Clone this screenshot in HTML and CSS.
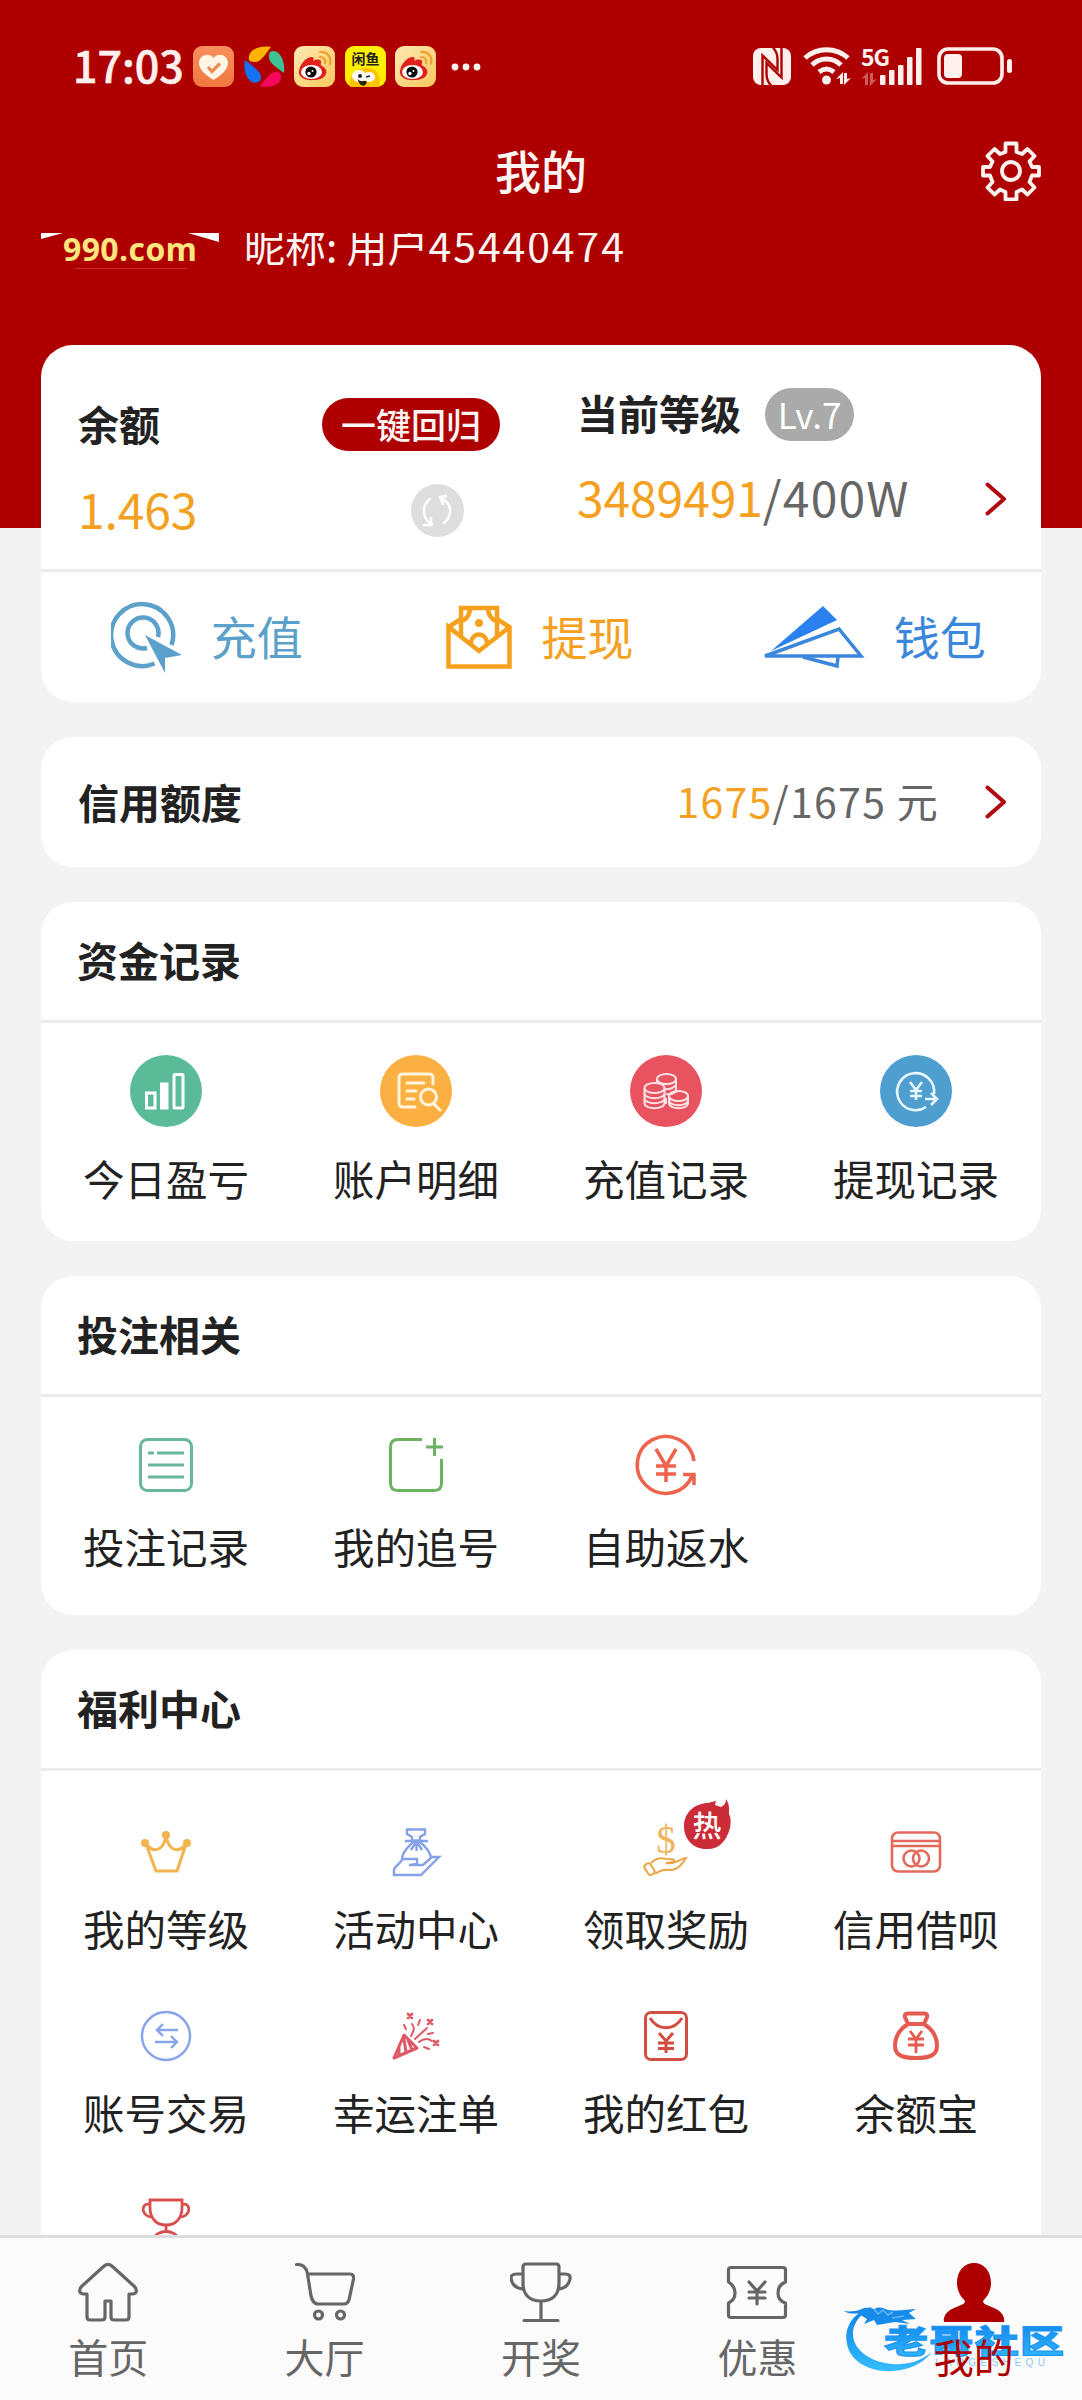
FILE: index.html
```html
<!DOCTYPE html>
<html lang="zh-CN">
<head>
<meta charset="utf-8">
<title>我的</title>
<link rel="stylesheet" href="styles.css">
</head>
<body>
<svg class="defs" width="0" height="0">
  <defs>
    <linearGradient id="peach" x1="0" y1="0" x2="1" y2="1"><stop offset="0" stop-color="#fdeab5"/><stop offset="1" stop-color="#fbc75c"/></linearGradient>
    <linearGradient id="orange" x1="0" y1="0" x2="0" y2="1"><stop offset="0" stop-color="#f98f5c"/><stop offset="1" stop-color="#f0783f"/></linearGradient>
    <linearGradient id="sky" x1="0" y1="0" x2="0" y2="1"><stop offset="0" stop-color="#0a7fe8"/><stop offset="1" stop-color="#35bcff"/></linearGradient>
    <symbol id="weibo" viewBox="0 0 41 41">
      <rect width="41" height="41" rx="9" fill="url(#peach)"/>
      <path d="M5 25C6 18 12 11 18 11c2 0 2 2 1 4 4-2 8-2 8 1 0 2-1 3 1 4 8 4 5 14-8 14C11 35 4 31 5 25z" fill="#e0201b"/>
      <ellipse cx="17.500" cy="26" rx="10.500" ry="7" fill="#fff"/>
      <circle cx="17" cy="26" r="5.600" fill="#0b0b0b"/>
      <circle cx="15" cy="27.500" r="1.700" fill="#fff"/><circle cx="18.500" cy="25" r="1" fill="#fff"/>
      <path d="M26 6c7-1 12 5 10 12M26 11c4 0 6 3 5 6" fill="none" stroke="#f0a030" stroke-width="2.200" stroke-linecap="round"/>
    </symbol>
    <symbol id="chevron" viewBox="0 0 22 34"><path d="M2.500 2.500L19 17 2.500 31.500" fill="none" stroke="#b00a10" stroke-width="4" stroke-linecap="round" stroke-linejoin="round"/></symbol>
  </defs>
</svg>

<header class="hero">
  <div class="statusbar">
    <span class="clock">17:03</span>
    <div class="apps">
      <svg width="41" height="41" viewBox="0 0 41 41"><rect width="41" height="41" rx="9" fill="url(#orange)"/><path d="M20.500 34C12 29 6 23 6 17c0-8 10-11 14.500-5C25 6 35 9 35 17c0 6-6 12-14.500 17z" fill="#fff6e6"/><path d="M15 21l4 4.500 8-8" fill="none" stroke="#e98c54" stroke-width="3.200"/></svg>
      <svg width="41" height="41" viewBox="0 0 41 41"><path d="M5 14C3 3 17-1 27 1 21 8 17 17 10 16c-3 0-4-1-5-2z" fill="#ffb300"/><path d="M26 6c8-5 16 8 14 21-6-5-15-9-15-16 0-2 0-4 1-5z" fill="#3cc295"/><path d="M36 27c5 11-10 16-20 13 5-6 11-14 16-14 2 0 3 0 4 1z" fill="#f5095f"/><path d="M14 36C6 40-2 27 1 14c6 5 16 11 16 17 0 3-1 4-3 5z" fill="#1572f5"/></svg>
      <svg width="41" height="41"><use href="#weibo"/></svg>
      <svg width="41" height="41" viewBox="0 0 41 41"><rect width="41" height="41" rx="9" fill="#fff000"/><path d="M5 41C2 29 12 22 21 22c10 0 16 6 13 19z" fill="#ffc400"/><ellipse cx="14" cy="30" rx="7" ry="6" fill="#fff"/><ellipse cx="24" cy="31" rx="6" ry="5" fill="#fff"/><circle cx="15" cy="30" r="2" fill="#222"/><path d="M21 31l4-1M14 35c3 2 5 0 7 1-1 4-5 4-7-1z" stroke="#222" stroke-width="1.500" fill="#222"/><text x="20.500" y="17.500" class="fish">闲鱼</text></svg>
      <svg width="41" height="41"><use href="#weibo"/></svg>
    </div>
    <svg class="more" width="30" height="8" viewBox="0 0 30 8"><g fill="#fff0ee"><circle cx="4" cy="4" r="3.400"/><circle cx="15" cy="4" r="3.400"/><circle cx="26" cy="4" r="3.400"/></g></svg>
    <svg class="signals" width="262" height="42" viewBox="0 0 262 42" fill="#fff0ee">
      <rect x="1" y="2" width="38" height="37" rx="8"/>
      <path d="M10.500 40V9.500L25.500 24V13q0-7-5-12M29.500 1v30.500L14.500 17v11q0 7 5 12" fill="none" stroke="#ae0000" stroke-width="2.400"/>
      <path d="M53 12c12-11 31-11 43 0M60 19c8-8 21-8 29 0M67 26c5-4 10-4 15 0" fill="none" stroke="#fff0ee" stroke-width="5"/>
      <circle cx="74.500" cy="34" r="4.500"/>
      <path d="M84 33l7-7v12h-3v-6zM99 32l-7 7V27h3v6z"/>
      <text x="109" y="19.500" class="fiveg">5G</text>
      <g opacity=".38"><path d="M109 33l7-7v13h-3v-7zM125 33l-7 7V27h3v7z"/></g>
      <rect x="128" y="29" width="5.500" height="10" rx="1"/><rect x="137" y="24" width="5.500" height="15" rx="1"/><rect x="146" y="19" width="5.500" height="20" rx="1"/><rect x="155" y="11" width="5.500" height="28" rx="1"/><rect x="164" y="2" width="5.500" height="37" rx="1"/>
      <rect x="187" y="3" width="63" height="34" rx="9" fill="none" stroke="#fff0ee" stroke-width="3.600"/>
      <rect x="192" y="8" width="18" height="24" rx="4"/><rect x="255" y="13" width="5" height="14" rx="2.500"/>
    </svg>
  </div>
  <div class="titlebar">
    <h1>我的</h1>
    <svg class="gear" width="60" height="60" viewBox="-30 -30 60 60" fill="none" stroke="#fff3f0" stroke-width="3.800" stroke-linejoin="round"><path d="M-5.500-27.500h11v8.500l5.500 2 5.500-5 7 7-5 5.500 2.500 5.500h7v8.500h-7l-2.500 6.500 5 5.500-7 7-5.500-5-5.500 2.500v7.500h-11v-7.500l-5.500-2.500-5.500 5-7-7 5-5.500-2.500-6.500h-7v-8.500h7l2.500-5.500-5-5.500 7-7 5.500 5 5.500-2z"/><circle r="9"/></svg>
  </div>
  <div class="profile">
    <div class="brand">
      <svg width="179" height="38" viewBox="0 0 179 38"><path d="M0 0h22L0 6z" fill="#fff"/><path d="M147 0h31v9z" fill="#fff"/><path d="M34 35.500h112" stroke="#cf5040" stroke-opacity=".6"/><text x="22" y="27.500" textLength="134" class="brandtext">990.com</text></svg>
    </div>
    <div class="nick">昵称: 用户<span>45440474</span></div>
  </div>
</header>

<main>
  <section class="card account">
    <div class="summary">
      <div class="balance">
        <div class="line"><h2>余额</h2><button class="recall">一键回归</button></div>
        <div class="line second"><span class="amount gold">1.463</span>
          <svg class="refresh" width="53" height="53" viewBox="0 0 53 53" fill="none" stroke="#fff" stroke-width="2.500" stroke-linecap="round"><circle cx="26.500" cy="26.500" r="26.500" fill="#dedede" stroke="none"/><path d="M19 15c-9 7-8 20 2 25M20 34v7h-7M33 39c9-8 8-20-3-25M32 20l-3-7 6-1"/></svg></div>
      </div>
      <div class="level">
        <div class="line"><h2>当前等级</h2><span class="lv">Lv.7</span></div>
        <div class="line second"><span class="amount"><span class="gold">3489491</span>/400W</span><svg width="22" height="34"><use href="#chevron"/></svg></div>
      </div>
    </div>
    <div class="actions">
      <a class="blue"><svg width="71" height="74" viewBox="0 0 71 74" fill="none" stroke="#5ba1cb" stroke-width="4.500"><path d="M43.500 63.500A31 31 0 1 1 60.500 45M36 48A15.500 15.500 0 1 1 47 37"/><path d="M34 35l37 20-17 3 0 15z" fill="#5ba1cb" stroke="none"/></svg><span>充值</span></a>
      <a class="gold"><svg width="66" height="64" viewBox="0 0 66 64" fill="none" stroke="#f6a11d" stroke-width="4.500"><path d="M2.500 22L15 14M51 14l12.500 8v39.500h-61V22L33 46l30.500-24M15 33V3h36v30M15 16c5-1 9-6 9-13M42 3c0 7 4 12 9 13M25 40c-1-14 17-14 16 0"/><circle cx="33" cy="18" r="4" fill="#f6a11d" stroke="none"/></svg><span>提现</span></a>
      <a class="azure"><svg width="104" height="64" viewBox="0 0 104 64"><path d="M62 1L10 46 76 15z" fill="#2b80f0"/><path d="M4 51L78 24l22 27z" fill="none" stroke="#3a87dc" stroke-width="3.500"/><path d="M42 52l34 9 1-9" fill="none" stroke="#3a87dc" stroke-width="3.500"/></svg><span>钱包</span></a>
    </div>
  </section>

  <section class="card credit">
    <h2>信用额度</h2>
    <span class="quota"><span class="gold">1675</span>/1675 元</span>
    <svg width="22" height="34"><use href="#chevron"/></svg>
  </section>

  <section class="card funds">
    <h2 class="cardhead">资金记录</h2>
    <div class="grid">
      <a><svg viewBox="0 0 72 72" fill="none" stroke="#fff" stroke-width="3"><circle cx="36" cy="36" r="36" fill="#5bbb99" stroke="none"/><rect x="16.500" y="38" width="8.500" height="15"/><rect x="31.500" y="29" width="5.500" height="24" fill="#fff"/><rect x="44" y="19.500" width="9" height="33.500" rx="1"/></svg><span>今日盈亏</span></a>
      <a><svg viewBox="0 0 72 72" fill="none" stroke="#fff5df" stroke-width="3" stroke-linecap="round"><circle cx="36" cy="36" r="36" fill="#fbb041" stroke="none"/><path d="M35 52H23q-4 0-4-4V23q0-4 4-4h26q4 0 4 4v6M27 28h17M27 36h9M27 44h7M54 49l6 6"/><circle cx="48.500" cy="42" r="8"/></svg><span>账户明细</span></a>
      <a><svg viewBox="0 0 72 72" fill="none" stroke="#ffe3e5" stroke-width="2"><circle cx="36" cy="36" r="36" fill="#e9525f" stroke="none"/><ellipse cx="36.500" cy="24" rx="9.500" ry="5"/><path d="M27 24v5M46 24v14M34 34c6 1 9-1 12-4M36 39c5 1 8 0 10-4"/><ellipse cx="24.500" cy="33" rx="10" ry="5"/><path d="M14.500 33v15c0 7 20 7 20 0V33M14.500 38c0 7 20 7 20 0M14.500 43c0 7 20 7 20 0"/><ellipse cx="48.500" cy="41" rx="9.500" ry="5"/><path d="M39 41v7c0 7 19 7 19 0v-7M39 45c0 7 19 7 19 0M36 43v6"/></svg><span>充值记录</span></a>
      <a><svg viewBox="0 0 72 72" fill="none" stroke="#e8f6ff" stroke-width="2.600"><circle cx="36" cy="36" r="36" fill="#4e9fd0" stroke="none"/><path d="M46 52A18.500 18.500 0 1 1 54 39M45 44h11M51 38l6 6-6 6M30 27l6 8 6-8M36 35v10M30 36h12M30 41h12"/></svg><span>提现记录</span></a>
    </div>
  </section>

  <section class="card bets">
    <h2 class="cardhead">投注相关</h2>
    <div class="grid">
      <a><svg viewBox="0 0 72 72" fill="none" stroke="#69b69e" stroke-width="3"><rect x="10.500" y="10.500" width="51" height="51" rx="7"/><path d="M18 24h6M27 24h27M18 36h36M18 48h36"/></svg><span>投注记录</span></a>
      <a><svg viewBox="0 0 72 72" fill="none" stroke="#6cb360" stroke-width="3"><path d="M42 10.500H18q-7.500 0-7.500 7.500v36q0 7.500 7.500 7.500h36q7.500 0 7.500-7.500V30"/><path d="M46 18h17M54.500 9v18"/></svg><span>我的追号</span></a>
      <a><svg viewBox="0 0 72 72" fill="none" stroke="#ee644c" stroke-width="3.500"><path d="M64 32A28.500 28.500 0 1 0 62 47M53 45.500h11V56M26 20l10 17 10-17M36 37v16M26 37h20M26 45h20"/></svg><span>自助返水</span></a>
    </div>
  </section>

  <section class="card perks">
    <h2 class="cardhead">福利中心</h2>
    <div class="grid">
      <a><svg viewBox="0 0 72 72" fill="none" stroke="#f5b34e" stroke-width="3"><path d="M16 28c7 9 17 8 20-8 3 16 13 17 20 8L47 55H26L16 28z"/><g fill="#f5b34e" stroke="none"><circle cx="36" cy="19" r="4"/><circle cx="15" cy="27" r="4"/><circle cx="57" cy="27" r="4"/></g></svg><span>我的等级</span></a>
      <a><svg viewBox="0 0 72 72" fill="none" stroke="#85a2e8" stroke-width="2.400"><path d="M27 13.500h18v4.500l-5 3v3.500h-8V21l-5-3zM25 25h23M34 25c-6 6-12 12-12 18M39 25c6 5 12 11 12 18M36 26l-5 8M36.500 26v9M37 26l5 8M14 59V53l9-10h14v5l-8 1h14l9-8h7L41 59z"/></svg><span>活动中心</span></a>
      <a class="hotcell"><svg viewBox="0 0 72 72" fill="none" stroke="#eda443" stroke-width="2"><text x="36" y="37" class="dollar">$</text><path d="M21 47c6-6 11-5 16-4 6 0 8 0 7 3l-8 1c9 2 13-4 20-5-4 6-8 12-16 12-7-1-11 1-15 4"/><rect x="16.500" y="47" width="7" height="12" rx="3" transform="rotate(-32 20 54)"/></svg>
        <svg class="hot" viewBox="0 0 48 52"><path d="M38 9c4-2 5-5 5-8 4 6 3 11 3 15 2 4 2 8 1 14C43 45 34 52 23 51 10 51 1 41 1 28 1 14 13 5 25 5c4-1 6-2 8-2l-1 4z" fill="#cb2c37"/><text x="24" y="39" class="hottext">热</text></svg><span>领取奖励</span></a>
      <a><svg viewBox="0 0 72 72" fill="none" stroke="#e26a5b" stroke-width="2.600"><rect x="12" y="16.500" width="48" height="39" rx="6"/><path d="M12 25h48M12 30h48"/><circle cx="31.500" cy="42.500" r="8"/><circle cx="41" cy="42.500" r="8"/></svg><span>信用借呗</span></a>
      <a><svg viewBox="0 0 72 72" fill="none" stroke="#86a4ea" stroke-width="2.400"><circle cx="36" cy="36" r="24"/><path d="M48 30H27M33 24l-6 6 6 6M25 42h22M41 36l6 6-6 6"/></svg><span>账号交易</span></a>
      <a><svg viewBox="0 0 72 72" fill="none" stroke="#e05766" stroke-width="2" stroke-linecap="round" stroke-linejoin="round"><path d="M24 35L14 58l23-10zM19 48v6M24 39l2 13M28 40l4 10" stroke-width="3"/><path d="M31 36c3-6 4-8 1-12M35 39L47 28M39 42c5-4 9-4 13-1M26 29l-2-4M38 25l2-5M48 34l5-1M44 47l5 2"/><path d="M28 14l4 4M32 14l-4 4M48 20l4 4M52 20l-4 4M54 41l4 4M58 41l-4 4" stroke-width="2.600"/></svg><span>幸运注单</span></a>
      <a><svg viewBox="0 0 72 72" fill="none" stroke="#d34e42" stroke-width="3"><rect x="15.500" y="12.500" width="41" height="47" rx="5.500"/><path d="M20 18c8 13 24 13 32 0M29 33l7 8 7-8M36 41v12M28 43h16M28 48.500h16"/></svg><span>我的红包</span></a>
      <a><svg viewBox="0 0 72 72" fill="none" stroke="#e65b50" stroke-width="4"><path d="M28 24l-3-7q-1-4 4-3.500h14q5-.5 4 3.500l-3 7M28 24h16C52 29 57 37 57 46c0 9-7 12-21 12s-21-3-21-12c0-9 5-17 13-22"/><path d="M30 31l6 8 6-8M36 39v14M28 39h16M28 45h16" stroke-width="2.800"/></svg><span>余额宝</span></a>
      <a><svg viewBox="0 0 72 72" fill="none" stroke="#d84e4e" stroke-width="2.800"><path d="M20 16h32v8c0 10-6 17-16 17s-16-7-16-17zM20 20c-11-1-8 14 3 13M52 20c11-1 8 14-3 13M36 41v6M24 55c2-10 22-10 24 0"/></svg></a>
    </div>
  </section>
</main>

<nav class="tabbar">
  <a><svg width="62" height="62" viewBox="0 0 62 62"><path d="M26 5Q31 0 36 5L58 25Q62 32 54 32H52V55Q52 58 49 58H37Q34 58 34 55V39H28V55Q28 58 25 58H13Q10 58 10 55V32H8Q0 32 4 25z"/></svg><span>首页</span></a>
  <a><svg width="62" height="62" viewBox="0 0 62 62"><path d="M2.500 2.500Q12 2 13.500 12H56Q60 12 59.500 17L55 38Q53.500 42 50 42H24Q19 42 17 34L13.500 12"/><circle cx="24.500" cy="53" r="4"/><circle cx="46.500" cy="53" r="4"/></svg><span>大厅</span></a>
  <a><svg width="62" height="62" viewBox="0 0 62 62"><path d="M13 5Q13 2 16 2H46Q49 2 49 5V21C49 32 43 39 31 39S13 32 13 21zM13 12H7Q1 12 1 16 2 26 13 27M49 12h6Q61 12 60 17 58 26 49 27M31 39V58M14 58.500H48"/></svg><span>开奖</span></a>
  <a><svg width="62" height="62" viewBox="0 0 62 62"><path d="M5 5.500H57Q59.500 5.500 59.500 8V20Q52 23 52 31T59.500 41V53Q59.500 55.500 57 55.500H5Q2.500 55.500 2.500 53V41Q9 38 9 31T2.500 20V8Q2.500 5.500 5 5.500zM23 20l8 9 8-9M31 29v13M23 30h16M23 36h16"/></svg><span>优惠</span></a>
  <a class="active"><svg width="62" height="62" viewBox="0 0 62 62"><path d="M31 1c10 0 17 8 17 20 0 8-4 14-8 18 0 4 6 4 13 8 6 3 9 8 8 13H1c-1-5 2-10 8-13 7-4 13-4 13-8-4-4-8-10-8-18C14 9 21 1 31 1z" stroke="none"/></svg><span>我的</span></a>
  <svg class="community" width="240" height="100" viewBox="0 0 240 100">
    <path d="M8 21c10 2 21-3 28-4-15 9-23 22-17 36 8 19 49 32 77 9-22 29-79 24-85-8-3-14 3-24 12-31-5 1-10 1-15-2z" fill="url(#sky)"/>
    <path d="M21 23c4-6 11-6 17-4 6-3 9-1 14 1 8 1 15 0 28-1l-7 4 7 6-14 1 8 4-15-2-18 3-3-5-10 4 3-5z" fill="#168be9"/>
    <path d="M38 19l4 5 5-4 5 5 5-3M56 28l12-2" fill="none" stroke="#69b9f4" stroke-width="1.500"/>
    <text x="0" y="0" transform="translate(48 63) scale(1 .72)" textLength="180" class="wm">老哥社区</text>
    <text x="99" y="76" textLength="110" class="wmsmall">LAOGESHEQU</text>
  </svg>
</nav>
</body>
</html>
```
FILE: styles.css
```css
* { box-sizing: border-box; }
body {
  margin: 0;
  width: 1082px;
  height: 2400px;
  overflow: hidden;
  position: relative;
  display: flex;
  flex-direction: column;
  background: #f3f3f3;
  color: #222;
  font-family: "Noto Sans CJK SC", "Noto Sans", sans-serif;
}
h1, h2 { margin: 0; }
.defs { position: absolute; }
.gold { color: #f4a020; }
.blue { color: #5ba1cb; }
.azure { color: #3a87dc; }

.hero {
  flex: none;
  height: 528px;
  background: #ae0000;
  color: #fff6f4;
}
.statusbar {
  display: flex;
  align-items: center;
  height: 133px;
  padding-left: 73px;
}
.clock {
  width: 120px;
  padding-bottom: 5px;
  font-size: 43px;
  font-weight: 500;
  line-height: 60px;
  color: #fff0ee;
  -webkit-text-stroke: .6px #fff0ee;
}
.apps { display: flex; gap: 9.500px; }
.fish { font-size: 14px; font-weight: 700; text-anchor: middle; fill: #222; }
.more { margin-left: 15px; }
.signals { margin-left: 271px; }
.fiveg { font-size: 23px; font-weight: 700; letter-spacing: -1px; }
.titlebar {
  display: grid;
  grid-template-columns: 1fr auto 1fr;
  align-items: center;
  height: 100px;
  padding-right: 41px;
}
.titlebar h1 {
  grid-column: 2;
  margin-left: 41px;
  padding-bottom: 29px;
  font-size: 46px;
  font-weight: 500;
  line-height: 50px;
}
.gear { justify-self: end; margin-bottom: 24px; }
.profile {
  display: flex;
  height: 60px;
  overflow: hidden;
  padding-left: 41px;
}
.brand { width: 203px; }
.brandtext {
  font-family: "Open Sans", sans-serif;
  font-size: 32px;
  font-weight: 700;
  fill: #ffe57e;
}
.nick { margin-top: -19px; font-size: 41px; line-height: 60px; }
.nick span { letter-spacing: 1.900px; }

main {
  flex: none;
  display: flex;
  flex-direction: column;
  gap: 35px;
  margin-top: -183px;
  padding: 0 41px;
}
.card { border-radius: 32px; background: #fff; overflow: hidden; }
.card h2 { font-size: 41px; font-weight: 700; line-height: 50px; }
.account { height: 357px; }
.summary {
  display: grid;
  grid-template-columns: 459px 1fr;
  height: 227px;
  padding: 0 34px 0 37px;
  border-bottom: 3px solid #ececec;
}
.balance { padding: 53px 0 0; }
.level { padding: 43px 0 0 40px; }
.line { display: flex; align-items: center; height: 53px; }
.balance .line { justify-content: space-between; padding-right: 37px; }
.balance h2 { padding-bottom: 3px; }
.level h2 { padding-bottom: 5px; }
.recall {
  width: 178px;
  height: 53px;
  padding: 0 0 2px;
  border: 0;
  border-radius: 27px;
  background: #ae0000;
  color: #fff6f4;
  font: 500 35px/50px "Noto Sans CJK SC", sans-serif;
}
.second { margin-top: 33px; }
.refresh { margin-right: 36px; }
.amount {
  padding-bottom: 4px;
  font-size: 48px;
  line-height: 53px;
  letter-spacing: 1.200px;
  color: #666;
  white-space: nowrap;
}
.amount.gold, .amount .gold { color: #f4a020; letter-spacing: -.1px; }
.lv {
  width: 89px;
  height: 53px;
  margin-left: 24px;
  border-radius: 27px;
  background: #aaa;
  color: #fff;
  font-size: 35px;
  font-weight: 400;
  line-height: 51px;
  text-align: center;
}
.level .second { justify-content: space-between; margin-top: 31px; }
.actions {
  display: grid;
  grid-template-columns: repeat(3, 1fr);
  height: 130px;
}
.actions a {
  display: flex;
  align-items: center;
  justify-content: center;
  gap: 29px;
  padding: 0 2px 1px 0;
  font-size: 46px;
  line-height: 58px;
}
.actions span { padding-bottom: 3px; }
.credit {
  display: flex;
  align-items: center;
  height: 130px;
  padding: 0 34px 0 37px;
}
.credit h2 { padding-bottom: 3px; }
.quota {
  margin-left: auto;
  margin-right: 46px;
  padding-bottom: 4px;
  font-size: 41px;
  line-height: 56px;
  letter-spacing: 1.300px;
  color: #666;
}

.funds, .bets { height: 339px; }
.perks { height: 760px; }
.card .cardhead {
  height: 121px;
  padding-left: 36px;
  border-bottom: 3px solid #ececec;
  line-height: 114px;
}
.grid { display: grid; grid-template-columns: repeat(4, 1fr); }
.grid a {
  position: relative;
  display: flex;
  flex-direction: column;
  align-items: center;
}
.grid a > svg { width: 72px; height: 72px; }
.grid span { font-size: 41.500px; line-height: 50px; }
.funds .grid { padding-top: 32px; }
.funds a { gap: 26px; }
.bets .grid { padding-top: 32px; }
.bets a { gap: 20px; }
.perks .grid { padding-top: 45px; grid-auto-rows: 184px; }
.perks a { gap: 15px; }
.dollar { font: 39px "Liberation Serif", serif; text-anchor: middle; fill: #efb45d; stroke: none; }
.grid a > .hot { position: absolute; left: 142px; top: -18px; width: 48px; height: 52px; }
.hottext { font-size: 29px; font-weight: 500; text-anchor: middle; fill: #fff; }

.tabbar {
  position: absolute;
  left: 0;
  bottom: 0;
  display: grid;
  grid-template-columns: repeat(5, 1fr);
  width: 1082px;
  height: 165px;
  padding-top: 24px;
  border-top: 3px solid #dcdddd;
  background: #fbfbfb;
  color: #666;
}
.tabbar a { display: flex; flex-direction: column; align-items: center; gap: 7px; }
.tabbar a svg { fill: none; stroke: #666; stroke-width: 3.200; stroke-linecap: round; stroke-linejoin: round; }
.tabbar span { position: relative; z-index: 1; font-size: 40px; line-height: 50px; }
.tabbar .active { color: #ae0000; }
.tabbar .active svg { fill: #ae0000; }
.community { position: absolute; left: 836px; top: 52px; }
.wm { font-size: 44px; font-weight: 900; fill: url(#sky); stroke: #2196f3; stroke-width: 1.500px; }
.wmsmall { font: 10px "Liberation Sans", sans-serif; fill: #8cc9f5; }
```
